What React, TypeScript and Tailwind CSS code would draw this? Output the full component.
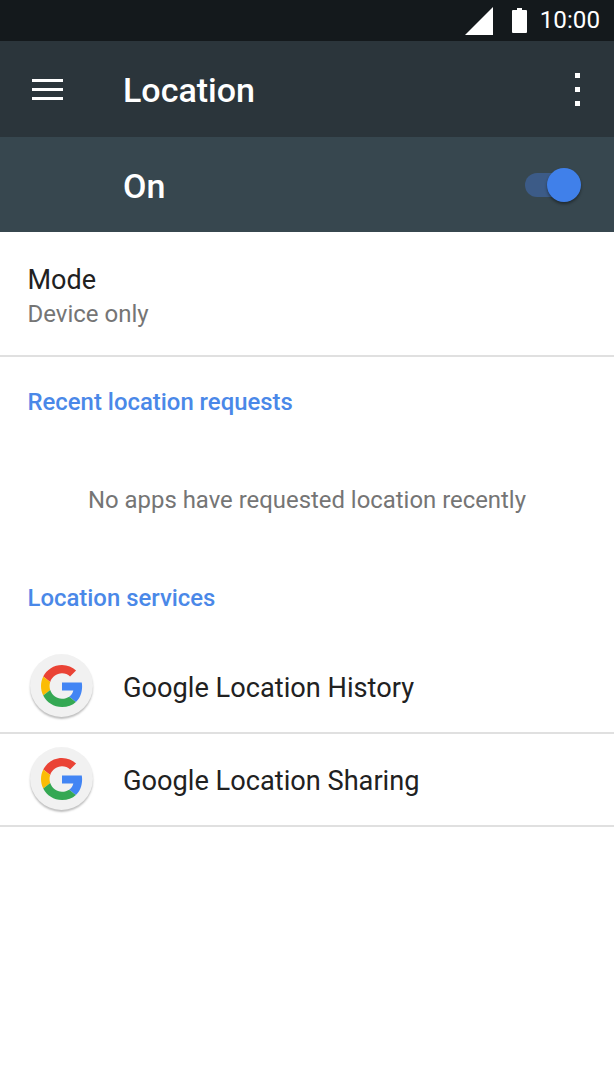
const Glogo = () => (
  <svg viewBox="0 0 48 48" className="h-[42px] w-[42px]">
    <path fill="#EA4335" d="M24 9.5c3.54 0 6.71 1.22 9.21 3.6l6.85-6.85C35.9 2.38 30.47 0 24 0 14.62 0 6.51 5.38 2.56 13.22l7.98 6.19C12.43 13.72 17.74 9.5 24 9.5z" />
    <path fill="#4285F4" d="M46.98 24.55c0-1.57-.15-3.09-.38-4.55H24v9.02h12.94c-.58 2.96-2.26 5.48-4.78 7.18l7.73 6c4.51-4.18 7.09-10.36 7.09-17.65z" />
    <path fill="#FBBC05" d="M10.53 28.59c-.48-1.45-.76-2.99-.76-4.59s.27-3.14.76-4.59l-7.98-6.19C.92 16.46 0 20.12 0 24c0 3.88.92 7.54 2.56 10.78l7.97-6.19z" />
    <path fill="#34A853" d="M24 48c6.48 0 11.93-2.13 15.89-5.81l-7.73-6c-2.15 1.45-4.92 2.3-8.16 2.3-6.26 0-11.57-4.22-13.47-9.91l-7.98 6.19C6.51 42.62 14.62 48 24 48z" />
  </svg>
);

const ServiceRow = ({ label }: { label: string }) => (
  <div className="flex h-[93px] items-center border-b-2 border-[#e0e0e0] pl-[30px]">
    <div className="mb-[2px] flex h-[63px] w-[63px] shrink-0 items-center justify-center rounded-full bg-[#f1f1f1] shadow-[0_2px_2px_rgba(0,0,0,0.25)]">
      <Glogo />
    </div>
    <span className="ml-[30px] pt-[4px] text-[27.2px] leading-none text-[#212121]">{label}</span>
  </div>
);

export default function App() {
  return (
    <div className="flex h-[1092px] w-[614px] flex-col overflow-hidden bg-white font-['Roboto',sans-serif]">
      <div className="flex h-[41px] items-center justify-end bg-[#14191c] pr-[14px]">
        <svg viewBox="0 0 28 28" className="h-[28px] w-[28px]">
          <path fill="#fff" d="M0 28 L28 0 V28 Z" />
        </svg>
        <svg viewBox="0 0 15 25" className="ml-[19px] h-[25px] w-[15px]">
          <path fill="#fff" d="M5 0h5v2h4a1 1 0 0 1 1 1v21a1 1 0 0 1-1 1H1a1 1 0 0 1-1-1V3a1 1 0 0 1 1-1h4z" />
        </svg>
        <span className="ml-[13px] text-[24.2px] leading-none text-white">10:00</span>
      </div>
      <div className="flex h-[96px] items-center bg-[#2b353b] pl-[32px] pr-[34px]">
        <div className="flex w-[31px] flex-col gap-[6px]">
          <div className="h-[3px] bg-white" />
          <div className="h-[3px] bg-white" />
          <div className="h-[3px] bg-white" />
        </div>
        <span className="ml-[60px] flex-1 pt-[2px] text-[34px] font-medium leading-none text-white">Location</span>
        <div className="flex flex-col gap-[9px]">
          <div className="h-[5px] w-[5px] bg-white" />
          <div className="h-[5px] w-[5px] bg-white" />
          <div className="h-[5px] w-[5px] bg-white" />
        </div>
      </div>
      <div className="flex h-[95px] items-center bg-[#37474f] pl-[123px] pr-[41px]">
        <span className="flex-1 pt-[2px] text-[34px] font-medium leading-none text-white">On</span>
        <div className="relative h-[24px] w-[48px]">
          <div className="h-full w-full rounded-full bg-[#3c5b87]" />
          <div className="absolute right-[-8px] top-[-5px] h-[34px] w-[34px] rounded-full bg-[#4080ea] shadow-[0_2px_3px_rgba(0,0,0,0.4)]" />
        </div>
      </div>
      <div className="flex h-[125px] flex-col border-b-2 border-[#e0e0e0] pl-[27.5px] pt-[34px]">
        <span className="text-[27px] leading-[28px] text-[#212121]">Mode</span>
        <span className="mt-[6px] text-[24px] leading-[28px] text-[#757575]">Device only</span>
      </div>
      <div className="pl-[27.5px] pt-[31px] text-[23.9px] font-medium leading-[28px] text-[#4a88e8]">Recent location requests</div>
      <div className="pt-[70px] text-center text-[23.9px] leading-[28px] text-[#757575]">No apps have requested location recently</div>
      <div className="pl-[27.5px] pt-[70px] text-[23.9px] font-medium leading-[28px] text-[#4a88e8]">Location services</div>
      <div className="mt-[29px]">
        <ServiceRow label="Google Location History" />
        <ServiceRow label="Google Location Sharing" />
      </div>
    </div>
  );
}
